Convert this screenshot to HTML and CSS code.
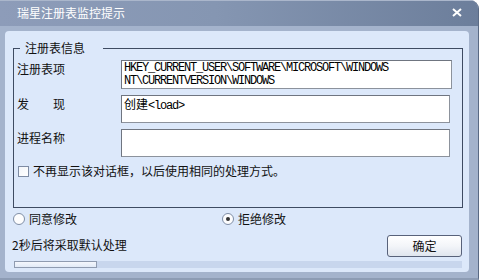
FILE: index.html
```html
<!DOCTYPE html>
<html lang="zh-CN">
<head>
<meta charset="utf-8">
<title>瑞星注册表监控提示</title>
<link rel="stylesheet" href="styles.css">
</head>
<body>
<div class="window">
  <div class="titlebar">
    <span class="title">瑞星注册表监控提示</span>
    <svg class="close" width="10" height="9" viewBox="0 0 10 9"><path d="M1 1 L9 8 M9 1 L1 8" stroke="#fff" stroke-width="2" fill="none"/></svg>
  </div>
  <div class="frame">
    <div class="panel">
      <fieldset class="group">
        <legend class="legend">注册表信息</legend>
        <div class="row">
          <span class="label">注册表项</span>
          <div class="field field-key">HKEY_CURRENT_USER\SOFTWARE\MICROSOFT\WINDOWS NT\CURRENTVERSION\WINDOWS</div>
        </div>
        <div class="row">
          <span class="label">发　　现</span>
          <div class="field field-narrow"><span class="cjk">创建</span>&lt;load&gt;</div>
        </div>
        <div class="row">
          <span class="label">进程名称</span>
          <div class="field field-narrow"></div>
        </div>
        <div class="check-row">
          <span class="checkbox"></span>
          <span>不再显示该对话框，以后使用相同的处理方式。</span>
        </div>
      </fieldset>
      <div class="radio-row">
        <div class="radio-item radio-first"><span class="radio"></span><span>同意修改</span></div>
        <div class="radio-item"><span class="radio checked"></span><span>拒绝修改</span></div>
      </div>
      <div class="bottom-row">
        <span class="countdown">2秒后将采取默认处理</span>
        <button class="button">确定</button>
      </div>
      <div class="track"><div class="fill" style="width:83px"></div></div>
    </div>
  </div>
</div>
</body>
</html>
```

FILE: styles.css
```css
html, body {
  margin: 0;
  padding: 0;
  background: #ffffff;
}
body {
  font-family: "Noto Sans CJK SC", "Noto Sans", sans-serif;
  font-size: 12px;
  color: #111;
}
.window {
  width: 479px;
  height: 280px;
  box-sizing: border-box;
  background: #a4b3cc;
  border-top-right-radius: 9px;
  border-right: 1px solid #5a6a84;
  border-bottom: 2px solid #8d9cb4;
  display: flex;
  flex-direction: column;
  overflow: hidden;
}
.titlebar {
  height: 26px;
  flex: none;
  display: flex;
  align-items: center;
  justify-content: space-between;
  padding: 0 16px 0 17px;
  background: linear-gradient(to right, #8d9cb9 0%, #8596b2 45%, #6c7e9b 100%);
  border-top: 1px solid #aab6cb;
  box-sizing: border-box;
  color: #fff;
}
.title {
  line-height: 14px;
  margin-top: -1px;
}
.close {
  display: block;
  margin-top: -2px;
}
.frame {
  flex: 1;
  display: flex;
  padding: 5px 9px 6px 5px;
}
.panel {
  flex: 1;
  background: #dce8fa;
  border-radius: 4px;
  display: flex;
  flex-direction: column;
}
.group {
  margin: 10px 6px 0 8px;
  padding: 5px 9px 29px 3px;
  border: 1px solid #3e4b62;
  min-width: 0;
}
.legend {
  margin-left: 3px;
  padding: 0 18px 0 5px;
  line-height: 14px;
}
.row {
  display: flex;
  align-items: flex-start;
}
.row + .row {
  margin-top: 6px;
}
.label {
  width: 104px;
  flex: none;
  line-height: 14px;
  margin-top: 2px;
}
.field {
  box-sizing: border-box;
  height: 28px;
  background: #fff;
  border: 1px solid #8c929c;
  border-top-color: #6f7580;
  border-left-color: #6f7580;
  font-family: "Liberation Mono", monospace;
  font-size: 12px;
  letter-spacing: -1.2px;
  line-height: 13px;
  padding: 1px 2px;
  color: #000;
}
.field-key {
  width: 331px;
  height: 29px;
}
.field-narrow {
  width: 329px;
}
.cjk {
  font-family: "Noto Sans CJK SC", sans-serif;
  letter-spacing: 0;
}
.check-row {
  display: flex;
  align-items: center;
  margin-top: 7px;
  margin-left: 1px;
  line-height: 14px;
}
.checkbox {
  width: 9px;
  height: 9px;
  border: 1px solid #7e8ca4;
  background: linear-gradient(to bottom right, #f2f5fa, #ffffff);
  margin-right: 4px;
}
.radio-row {
  display: flex;
  align-items: center;
  margin: 4px 0 0 8px;
  height: 14px;
}
.radio-item {
  display: flex;
  align-items: center;
  line-height: 14px;
}
.radio-first {
  width: 209px;
}
.radio {
  width: 10px;
  height: 10px;
  border: 1px solid #7f8ea6;
  border-radius: 50%;
  background: #fdfdfe;
  margin-right: 4px;
  position: relative;
}
.radio.checked::after {
  content: "";
  position: absolute;
  left: 3px;
  top: 3px;
  width: 4px;
  height: 4px;
  border-radius: 50%;
  background: #333;
}
.bottom-row {
  display: flex;
  align-items: center;
  justify-content: space-between;
  margin: 9px 7px 0 7px;
  height: 22px;
}
.countdown {
  line-height: 14px;
  margin-top: -3px;
}
.button {
  width: 75px;
  height: 22px;
  border: 1px solid #58627a;
  border-radius: 3px;
  background: linear-gradient(to bottom, #ffffff 0%, #f3f5f9 50%, #dfe5ee 100%);
  font-family: "Noto Sans CJK SC", sans-serif;
  font-size: 12px;
  color: #111;
  padding: 0;
  line-height: 18px;
}
.track {
  margin: 4px 7px 0 9px;
  height: 7px;
  background: #c8d6ed;
  display: flex;
}
.fill {
  box-sizing: border-box;
  height: 7px;
  border: 1px solid #8f9bb0;
  background: linear-gradient(to bottom, #f4f7fc, #e2eaf7);
}
```
